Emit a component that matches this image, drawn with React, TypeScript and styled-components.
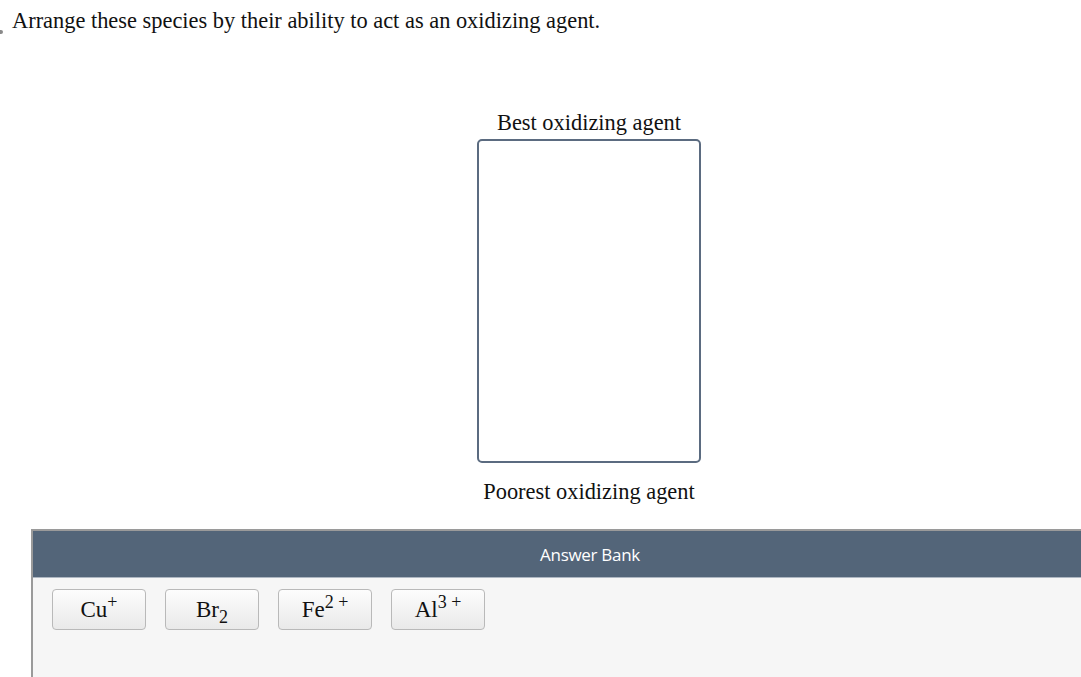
import React from "react";
import styled, { createGlobalStyle } from "styled-components";

const GlobalStyle = createGlobalStyle`
  html, body {
    margin: 0;
    padding: 0;
    background: #fff;
    overflow: hidden;
  }
  body {
    font-family: "Liberation Serif", "Times New Roman", serif;
    color: #111;
  }
`;

const Page = styled.div`
  position: relative;
  width: 1081px;
  height: 677px;
  overflow: hidden;
`;

// small grey marker at the left edge of the prompt line
const Marker = styled.span`
  position: absolute;
  left: 0;
  top: 30px;
  width: 3px;
  height: 4px;
  border-radius: 0 2px 2px 0;
  background: #8a8a8a;
`;

const Prompt = styled.p`
  margin: 0;
  padding: 9px 0 0 12px;
  font-size: 22.4px;
  line-height: 24px;
`;

const Workspace = styled.div`
  margin: 78px 0 0 31px;
  width: 1116px;
  display: flex;
  flex-direction: column;
  align-items: center;
`;

const Label = styled.div`
  font-size: 22.4px;
  line-height: 24px;
  text-align: center;
`;

const DropZone = styled.div`
  box-sizing: border-box;
  width: 224px;
  height: 324px;
  margin: 4px 0 17px;
  border: 2px solid #5b6b80;
  border-radius: 5px;
  background: #fff;
`;

const Bank = styled.section`
  align-self: stretch;
  margin-top: 25px;
  border-top: 2px solid #9a9a9a;
  border-left: 2px solid #9a9a9a;
  background: #f6f6f6;
  height: 160px;
`;

const BankHeader = styled.header`
  height: 46px;
  display: flex;
  align-items: center;
  justify-content: center;
  background: #536579;
  border-bottom: 1px solid #aeb7c2;
  color: #fff;
  font-family: "Open Sans", "Noto Sans", sans-serif;
  font-size: 17px;
  letter-spacing: -0.3px;
`;

const ChipRow = styled.div`
  display: flex;
  gap: 19px;
  padding: 11px 0 0 19px;
`;

const Chip = styled.button`
  box-sizing: border-box;
  width: 94px;
  height: 41px;
  padding: 0;
  border: 1px solid #b9b9b9;
  border-radius: 4px;
  background: linear-gradient(#fdfdfd, #e9e9e9);
  font-family: "Liberation Serif", "Times New Roman", serif;
  font-size: 23px;
  color: #111;
  line-height: 1;
`;

const Sup = styled.sup`
  font-size: 18px;
  vertical-align: 9px;
  line-height: 0;
`;

const Sub = styled.sub`
  font-size: 18px;
  vertical-align: -6px;
  line-height: 0;
`;

const species: { base: string; sup?: string; sub?: string }[] = [
  { base: "Cu", sup: "+" },
  { base: "Br", sub: "2" },
  { base: "Fe", sup: "2 +" },
  { base: "Al", sup: "3 +" },
];

export default function App() {
  return (
    <Page>
      <GlobalStyle />
      <Marker />
      <Prompt>Arrange these species by their ability to act as an oxidizing agent.</Prompt>
      <Workspace>
        <Label>Best oxidizing agent</Label>
        <DropZone />
        <Label>Poorest oxidizing agent</Label>
        <Bank>
          <BankHeader>Answer Bank</BankHeader>
          <ChipRow>
            {species.map((s) => (
              <Chip key={s.base}>
                {s.base}
                {s.sup && <Sup>{s.sup}</Sup>}
                {s.sub && <Sub>{s.sub}</Sub>}
              </Chip>
            ))}
          </ChipRow>
        </Bank>
      </Workspace>
    </Page>
  );
}
